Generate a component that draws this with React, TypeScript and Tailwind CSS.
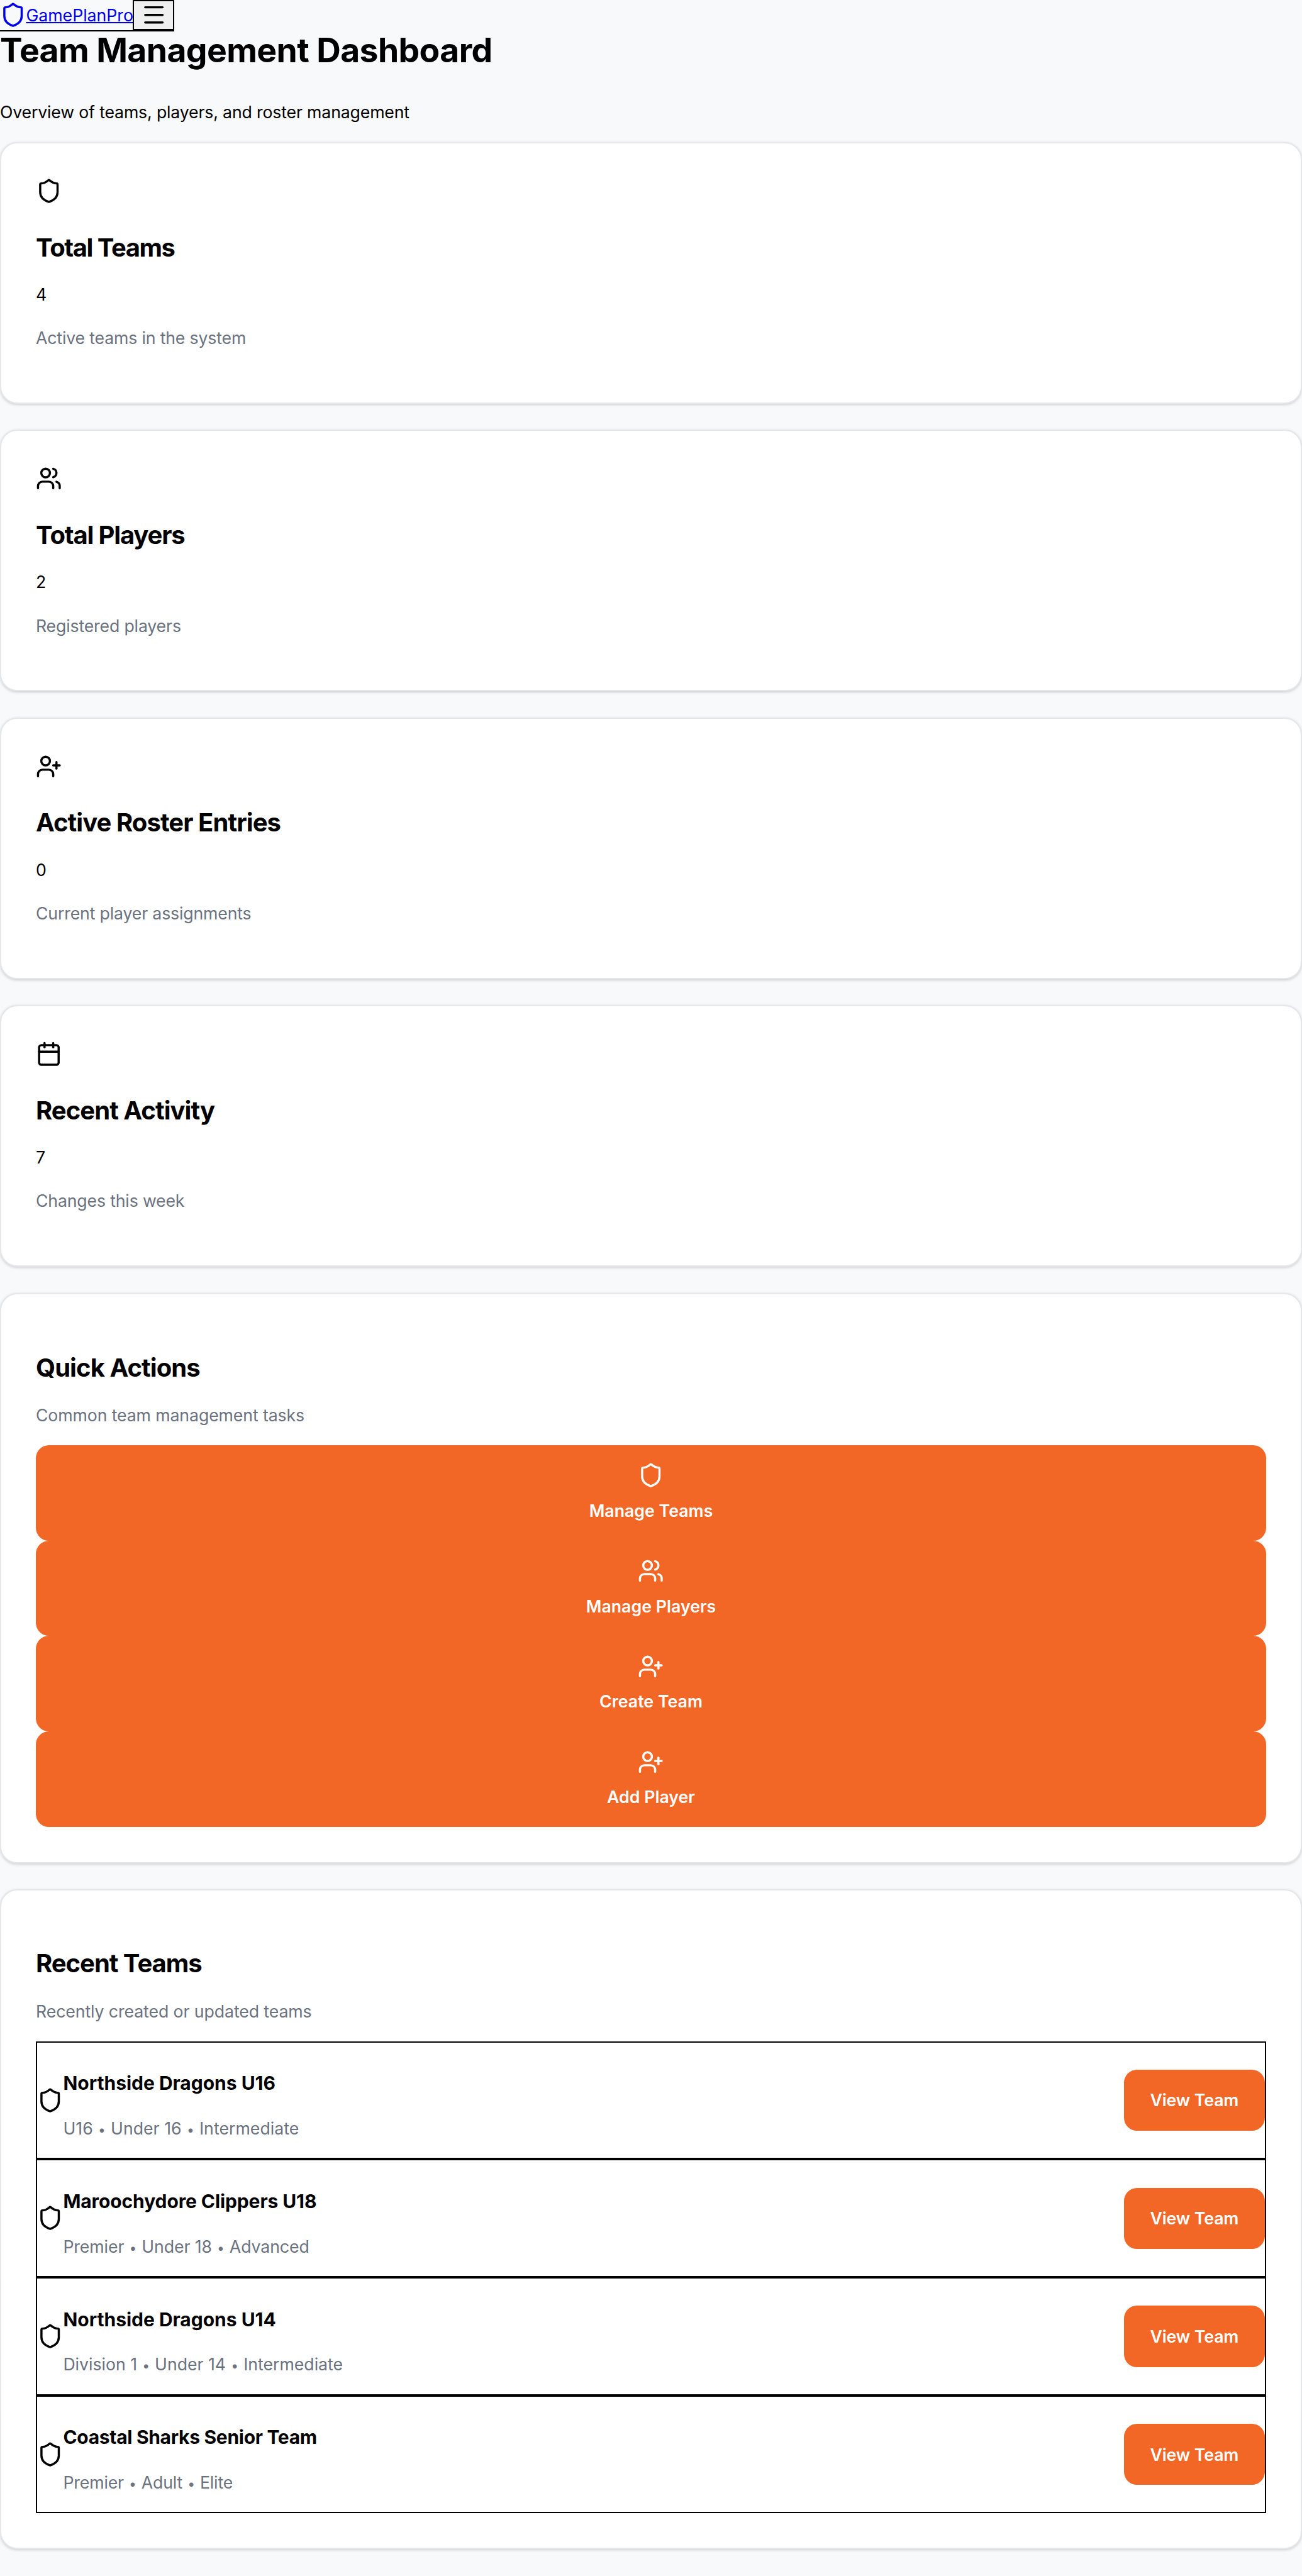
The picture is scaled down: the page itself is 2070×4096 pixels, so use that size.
import { Shield, Users, UserPlus, Calendar, Menu } from "lucide-react";
import type { LucideIcon } from "lucide-react";

const stats: { icon: LucideIcon; title: string; tracking: string; value: string; note: string }[] = [
  { icon: Shield, title: "Total Teams", tracking: "tracking-[-1.44px]", value: "4", note: "Active teams in the system" },
  { icon: Users, title: "Total Players", tracking: "tracking-[-1.16px]", value: "2", note: "Registered players" },
  { icon: UserPlus, title: "Active Roster Entries", tracking: "tracking-[-0.93px]", value: "0", note: "Current player assignments" },
  { icon: Calendar, title: "Recent Activity", tracking: "tracking-[-0.95px]", value: "7", note: "Changes this week" },
];

const actions: { icon: LucideIcon; label: string }[] = [
  { icon: Shield, label: "Manage Teams" },
  { icon: Users, label: "Manage Players" },
  { icon: UserPlus, label: "Create Team" },
  { icon: UserPlus, label: "Add Player" },
];

const teams = [
  { name: "Northside Dragons U16", tracking: "tracking-[-0.01px]", details: ["U16", "Under 16", "Intermediate"], detailTracking: "tracking-[0.02px]" },
  { name: "Maroochydore Clippers U18", tracking: "tracking-[-0.1px]", details: ["Premier", "Under 18", "Advanced"], detailTracking: "tracking-[-0.1px]" },
  { name: "Northside Dragons U14", tracking: "tracking-[-0.01px]", details: ["Division 1", "Under 14", "Intermediate"], detailTracking: "tracking-[-0.03px]" },
  { name: "Coastal Sharks Senior Team", tracking: "tracking-[-0.3px]", details: ["Premier", "Adult", "Elite"], detailTracking: "tracking-[-0.15px]" },
];

const card =
  "rounded-[27.6px] border-2 border-[#e5e7eb] bg-white px-[55px] shadow-[0_1.7px_5.2px_rgba(0,0,0,0.1),0_1.7px_3.4px_rgba(0,0,0,0.06)]";
const heading = "text-[40px] leading-[52px] font-bold";

function Dot() {
  return <span className="mx-[0.7px] text-[21px] leading-none">•</span>;
}

export default function App() {
  return (
    <div className="h-[4096px] w-[2070px] overflow-hidden bg-[#f8f9fb] font-[Inter,sans-serif] text-[26.7px] leading-[44px] tracking-[-0.17px] text-black">
      <header className="flex h-[50px] w-[277px] items-start border-b-2 border-black">
        <a className="flex h-12 items-center text-[#0000ee]">
          <Shield className="size-[41.4px] shrink-0" />
          <span className="w-[170px] whitespace-nowrap tracking-[-0.02px] underline decoration-2">GamePlanPro</span>
        </a>
        <button className="flex h-12 w-[66px] items-center justify-center border-2 border-black bg-[#efefef]">
          <Menu className="size-[41.4px] shrink-0" />
        </button>
      </header>
      <h1 className="h-[60px] text-[53.4px] leading-[60px] font-bold tracking-[-0.59px]">Team Management Dashboard</h1>
      <p className="mt-[46px] h-[70px]">Overview of teams, players, and roster management</p>

      <main className="flex flex-col gap-[41.4px]">
        {stats.map(({ icon: Icon, title, tracking, value, note }) => (
          <section key={title} className={`h-[416px] pt-[54.9px] ${card}`}>
            <Icon className="size-[41.4px]" />
            <h3 className={`mt-[43.4px] ${heading} ${tracking}`}>{title}</h3>
            <p className="mt-[26.3px]">{value}</p>
            <p className="mt-[25.2px] text-[#6b7280]">{note}</p>
          </section>
        ))}

        <section className={`h-[907px] pt-[91px] ${card}`}>
          <h3 className={`tracking-[-0.93px] ${heading}`}>Quick Actions</h3>
          <p className="mt-[27.6px] tracking-[-0.12px] text-[#6b7280]">Common team management tasks</p>
          <div className="mt-[25.6px] flex flex-col">
            {actions.map(({ icon: Icon, label }) => (
              <button
                key={label}
                className="flex h-[151.8px] flex-col items-center rounded-[20.7px] bg-[#f26726] pt-[27.6px] font-semibold tracking-[0.03px] text-white"
              >
                <Icon className="size-[41.4px]" />
                <span className="mt-[13px]">{label}</span>
              </button>
            ))}
          </div>
        </section>

        <section className={`h-[1049.5px] pt-[90.5px] ${card}`}>
          <h3 className={`tracking-[-1.02px] ${heading}`}>Recent Teams</h3>
          <p className="mt-[27.6px] tracking-[-0.1px] text-[#6b7280]">Recently created or updated teams</p>
          <div className="mt-[25.6px] flex flex-col">
            {teams.map(({ name, tracking, details, detailTracking }) => (
              <div key={name} className="flex h-[187.7px] items-center border-2 border-black">
                <Shield className="size-[41.4px] shrink-0" />
                <div className="grow pt-[17.4px]">
                  <h4 className={`text-[30px] leading-[44px] font-bold ${tracking}`}>{name}</h4>
                  <p className={`mt-[27.7px] text-[#6b7280] ${detailTracking}`}>
                    {details[0]} <Dot /> {details[1]} <Dot /> {details[2]}
                  </p>
                </div>
                <button className="h-[97.3px] w-[224.3px] rounded-[20.7px] bg-[#f26726] font-semibold tracking-[-0.1px] text-white">View Team</button>
              </div>
            ))}
          </div>
        </section>
      </main>
    </div>
  );
}
